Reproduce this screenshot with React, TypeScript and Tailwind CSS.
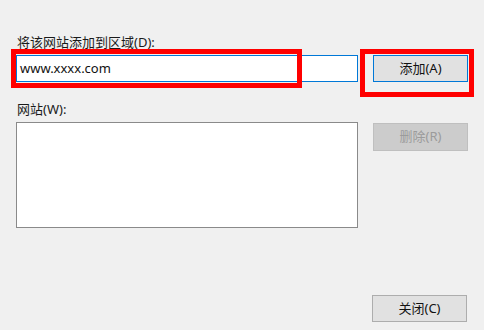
import React from 'react';

const font = "font-['Noto_Sans','Noto_Sans_CJK_SC',sans-serif]";

export default function App() {
  return (
    <div className={`relative w-[484px] h-[330px] overflow-hidden bg-[#f0f0f0] text-[#1a1a1a] ${font}`}>
      <div className="pt-[34px] pl-[16px]">
        <label className="block text-[13px] leading-[16px] pl-[1px]">将该网站添加到区域(D):</label>

        <div className="mt-[5px] flex items-center gap-[15px]">
          <div className="w-[342px] h-[27px] border border-[#0078d7] bg-white flex items-center pl-[3px] text-[13px] text-[#111]">
            www.xxxx.com
          </div>
          <button className="w-[95px] h-[27px] border border-[#0078d7] bg-[#e1e1e1] text-[13px] text-[#111]">
            添加(A)
          </button>
        </div>

        <label className="block mt-[19px] text-[13px] leading-[16px] pl-[1px]">网站(W):</label>

        <div className="mt-[5px] flex items-start gap-[15px]">
          <div className="w-[342px] h-[106px] border border-[#8a8a8a] bg-white" />
          <button
            disabled
            className="mt-[1px] w-[95px] h-[28px] border border-[#bfbfbf] bg-[#cccccc] text-[13px] text-[#9b9b9b]"
          >
            删除(R)
          </button>
        </div>

        <div className="mt-[67px] flex justify-end pr-[17px]">
          <button className="w-[95px] h-[27px] border border-[#adadad] bg-[#e1e1e1] text-[13px] text-[#111]">
            关闭(C)
          </button>
        </div>
      </div>

      {/* red highlight annotations */}
      <div className="absolute left-[11px] top-[49px] w-[291px] h-[39px] border-[5px] border-[#ff0000]" />
      <div className="absolute left-[360px] top-[49px] w-[114px] h-[48px] border-[5px] border-[#ff0000]" />
    </div>
  );
}
